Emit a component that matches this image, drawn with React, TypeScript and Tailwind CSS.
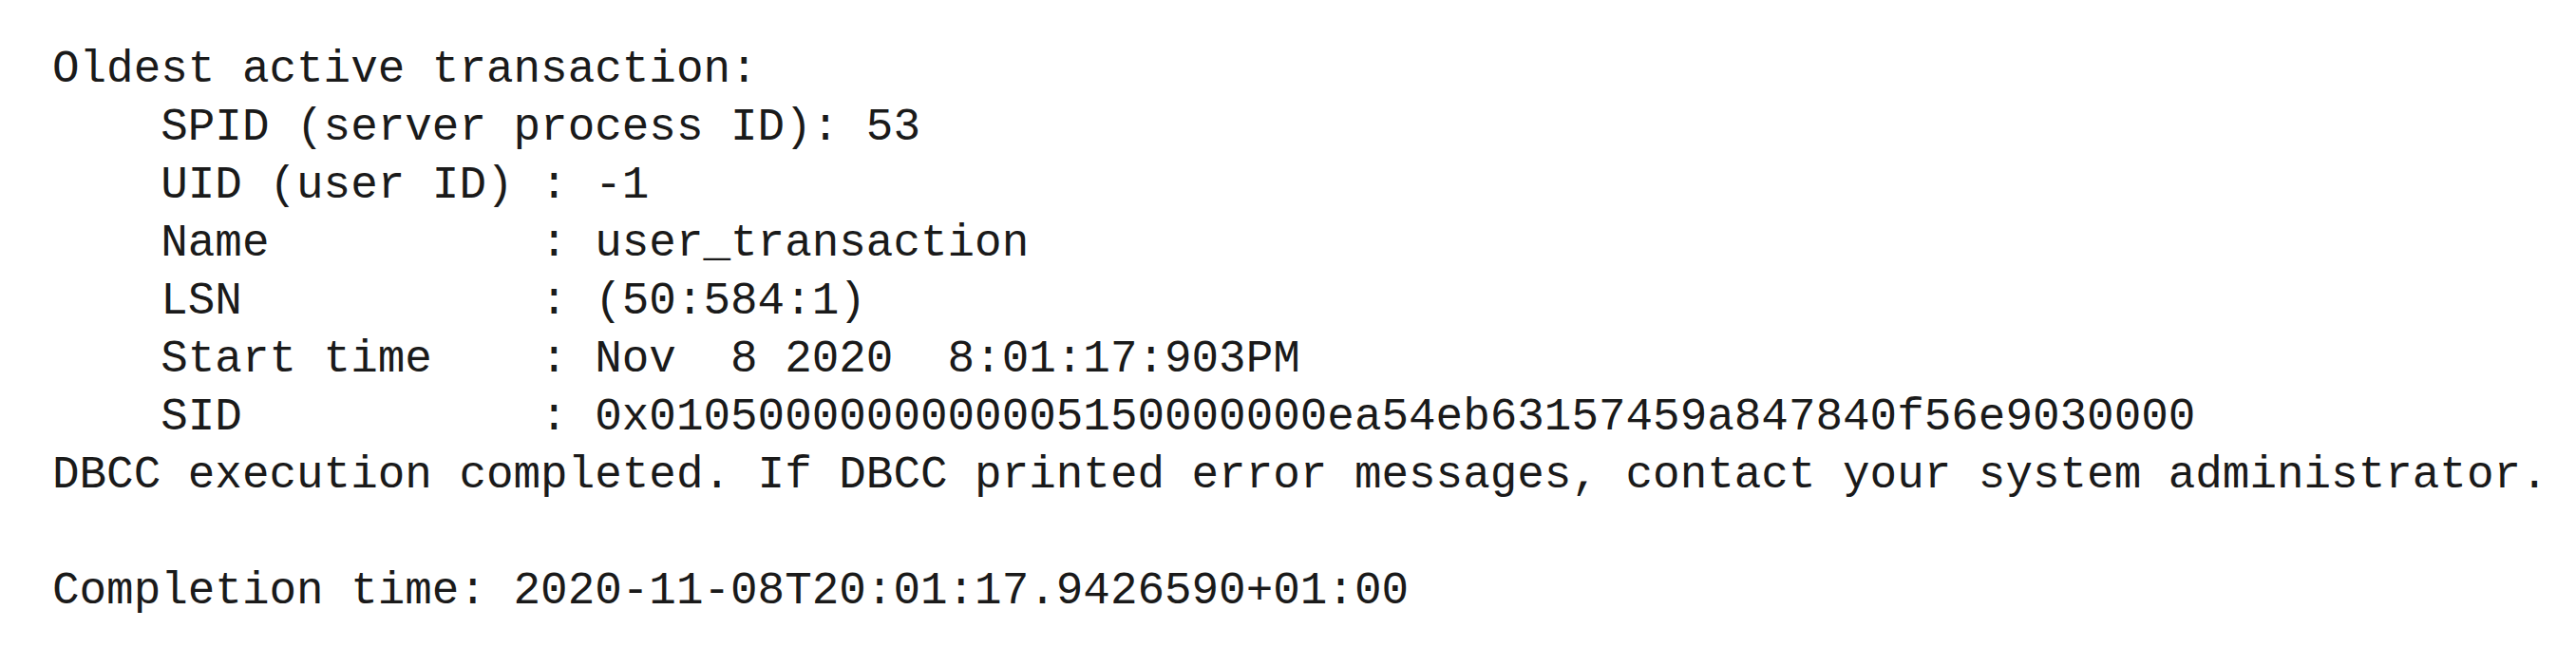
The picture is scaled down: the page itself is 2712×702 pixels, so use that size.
export default function App() {
  const lines = [
    "Oldest active transaction:",
    "    SPID (server process ID): 53",
    "    UID (user ID) : -1",
    "    Name          : user_transaction",
    "    LSN           : (50:584:1)",
    "    Start time    : Nov  8 2020  8:01:17:903PM",
    "    SID           : 0x0105000000000005150000000ea54eb63157459a847840f56e9030000",
    "DBCC execution completed. If DBCC printed error messages, contact your system administrator.",
    "",
    "Completion time: 2020-11-08T20:01:17.9426590+01:00",
  ];

  return (
    <main className="w-[2712px] h-[702px] bg-white overflow-hidden">
      <pre className="pl-[55px] pt-[43px] font-['Liberation_Mono',monospace] text-[47.6px] leading-[61px] text-[#1a1a1a] whitespace-pre">
        {lines.map((line, i) => (
          <div key={i} className="h-[61px]">
            {line}
          </div>
        ))}
      </pre>
    </main>
  );
}
